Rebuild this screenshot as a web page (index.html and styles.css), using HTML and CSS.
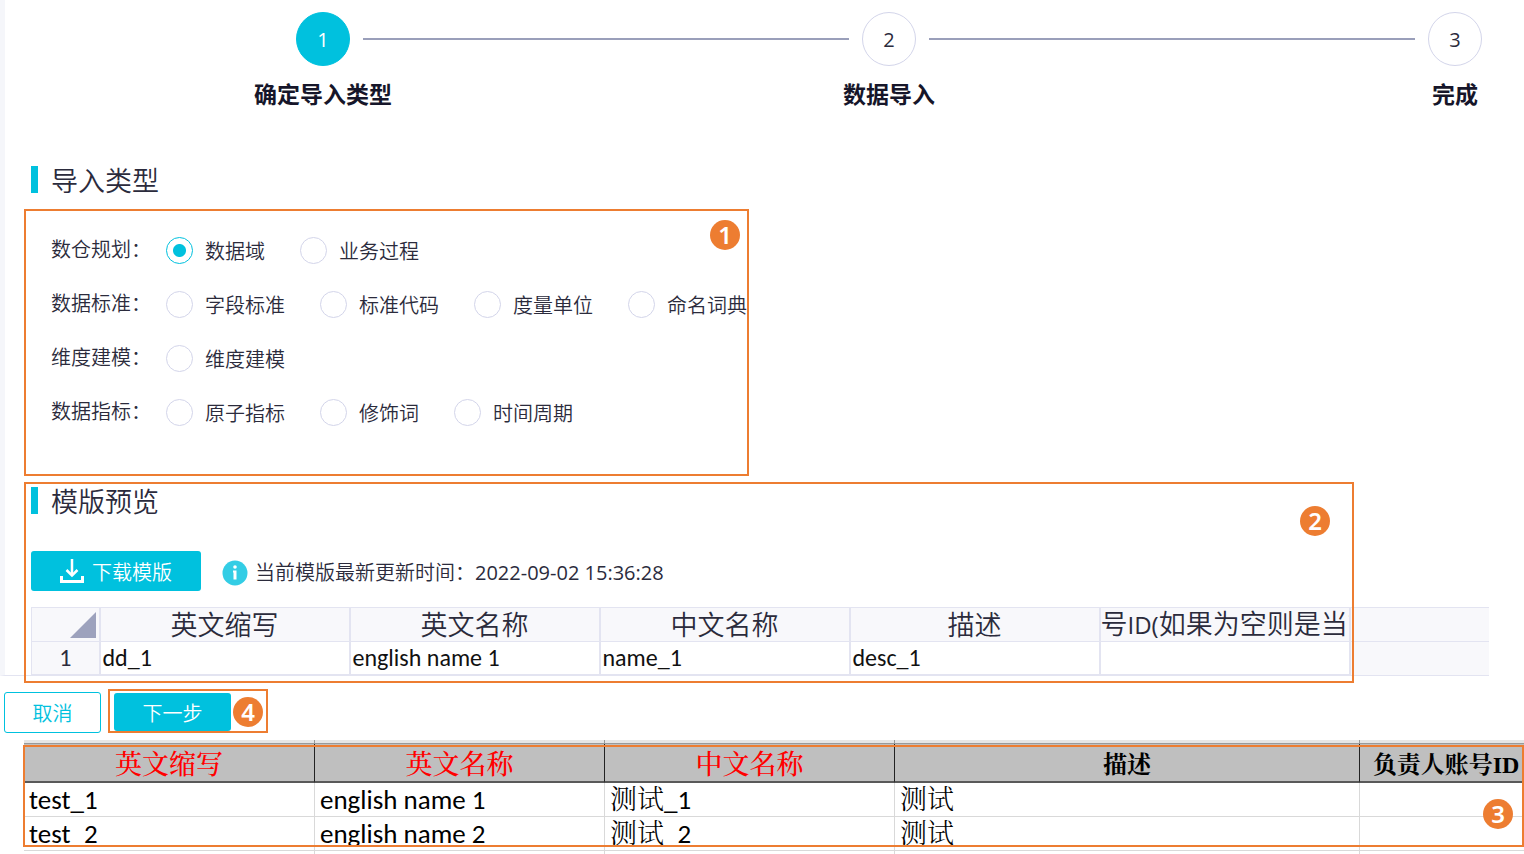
FILE: index.html
```html
<!DOCTYPE html>
<html lang="zh-CN">
<head>
<meta charset="utf-8">
<meta name="viewport" content="width=device-width, initial-scale=1">
<title>数据导入</title>
<link rel="stylesheet" href="styles.css">
</head>
<body>
<main class="panel">
  <ol class="steps">
    <li class="step step-active"><span class="step-dot">1</span><span class="step-label">确定导入类型</span></li>
    <li class="step-line" aria-hidden="true"></li>
    <li class="step"><span class="step-dot">2</span><span class="step-label">数据导入</span></li>
    <li class="step-line" aria-hidden="true"></li>
    <li class="step"><span class="step-dot">3</span><span class="step-label">完成</span></li>
  </ol>

  <h2 class="section-title section-title-first">导入类型</h2>
  <form class="types">
    <span class="badge types-badge">1</span>
    <div class="type-row" role="group" aria-labelledby="g1">
      <span class="type-name" id="g1">数仓规划<span class="colon">：</span></span>
      <label class="option"><input type="radio" name="type" checked>数据域</label>
      <label class="option"><input type="radio" name="type">业务过程</label>
    </div>
    <div class="type-row" role="group" aria-labelledby="g2">
      <span class="type-name" id="g2">数据标准<span class="colon">：</span></span>
      <label class="option"><input type="radio" name="type">字段标准</label>
      <label class="option"><input type="radio" name="type">标准代码</label>
      <label class="option"><input type="radio" name="type">度量单位</label>
      <label class="option"><input type="radio" name="type">命名词典</label>
    </div>
    <div class="type-row" role="group" aria-labelledby="g3">
      <span class="type-name" id="g3">维度建模<span class="colon">：</span></span>
      <label class="option"><input type="radio" name="type">维度建模</label>
    </div>
    <div class="type-row" role="group" aria-labelledby="g4">
      <span class="type-name" id="g4">数据指标<span class="colon">：</span></span>
      <label class="option"><input type="radio" name="type">原子指标</label>
      <label class="option"><input type="radio" name="type">修饰词</label>
      <label class="option"><input type="radio" name="type">时间周期</label>
    </div>
  </form>

  <section class="preview">
    <h2 class="section-title">模版预览</h2>
    <div class="toolbar">
      <button class="btn btn-primary btn-download" type="button">
        <svg width="24" height="24" viewBox="0 0 24 24" fill="none" stroke="currentColor" stroke-width="3" aria-hidden="true"><path d="M1.500 17v5.500h21V17"/><path d="M12 0v15" stroke-width="2.500"/><path d="M6.500 11l5.500 5.500 5.500-5.500" stroke-width="2.500"/></svg>
        下载模版
      </button>
      <svg class="info" width="26" height="26" viewBox="0 0 26 26" aria-hidden="true"><circle cx="13" cy="13" r="12.500" fill="#33cde5"/><circle cx="13" cy="7" r="1.800" fill="#fff"/><path d="M11 10.500h3.500v9h-3v-7H11z" fill="#fff"/></svg>
      <span class="updated">当前模版最新更新时间：<time>2022-09-02 15:36:28</time></span>
    </div>
    <div class="grid-wrap">
      <table class="grid">
        <colgroup><col class="c-num"><col class="c-cell"><col class="c-cell"><col class="c-cell"><col class="c-cell"><col class="c-cell"><col></colgroup>
        <thead>
          <tr><th class="corner"><svg width="26" height="26" viewBox="0 0 26 26" aria-hidden="true"><path d="M26 0v26H0z" fill="#9da2bd"/></svg></th><th>英文缩写</th><th>英文名称</th><th>中文名称</th><th>描述</th><th class="clipped">号<span class="latin">ID(</span>如果为空则是当前</th><td class="filler" rowspan="2"></td></tr>
        </thead>
        <tbody>
          <tr><th class="row-no">1</th><td>dd_1</td><td>english name 1</td><td>name_1</td><td>desc_1</td><td></td></tr>
        </tbody>
      </table>
    </div>
    <div class="frame preview-frame"><span class="badge preview-badge">2</span></div>
  </section>
</main>

<footer class="actions">
  <button class="btn btn-ghost" type="button">取消</button>
  <div class="next-frame">
    <button class="btn btn-primary btn-next" type="button">下一步</button>
    <span class="badge">4</span>
  </div>
</footer>

<section class="sheet">
  <table class="sheet-table">
    <colgroup><col class="s-first"><col class="s-a"><col class="s-a"><col class="s-b"><col></colgroup>
    <thead>
      <tr class="sliver"><td></td><td></td><td></td><td></td><td></td></tr>
      <tr><th class="required">英文缩写</th><th class="required">英文名称</th><th class="required">中文名称</th><th>描述</th><th class="owner">负责人账号<span class="mono">ID</span></th></tr>
    </thead>
    <tbody>
      <tr><td>test_1</td><td>english name 1</td><td><span class="han">测试</span>_1</td><td><span class="han">测试</span></td><td></td></tr>
      <tr><td>test_2</td><td>english name 2</td><td><span class="han">测试</span>_2</td><td><span class="han">测试</span></td><td></td></tr>
      <tr class="rest"><td></td><td></td><td></td><td></td><td></td></tr>
    </tbody>
  </table>
  <div class="frame sheet-frame"><span class="badge sheet-badge">3</span></div>
</section>
</body>
</html>
```
FILE: styles.css
```css
:root {
  --cyan: #00c1de;
  --orange: #ed7d31;
  --line: #e3e4f1;
  --ink: #2b2b3c;
}

* { box-sizing: border-box; }

body {
  margin: 0;
  background: #fff;
  color: var(--ink);
  font-family: "Open Sans", "Noto Sans CJK SC", sans-serif;
  font-size: 20px;
  font-weight: 350;
}

.panel {
  margin-right: 35px;
  padding: 12px 0 0 19px;
  border-left: 5px solid #f5f6fa;
  border-bottom: 1px solid var(--line);
}

/* Progress steps */
.steps {
  display: flex;
  align-items: flex-start;
  gap: 13px;
  margin: 0;
  padding: 0 7px 0 272px;
  list-style: none;
}

.step {
  display: flex;
  flex: none;
  flex-direction: column;
  align-items: center;
  gap: 12px;
  width: 54px;
}

.step-dot {
  display: grid;
  place-items: center;
  width: 54px;
  height: 54px;
  border: 1px solid #d3d5ea;
  border-radius: 50%;
  font-weight: 400;
}

.step-active .step-dot {
  border-color: var(--cyan);
  background: var(--cyan);
  color: #fff;
}

.step-label {
  color: #16162a;
  font-size: 23px;
  font-weight: 700;
  line-height: 32px;
  white-space: nowrap;
}

.step-line {
  flex: 1;
  height: 2px;
  margin-top: 26px;
  background: #9a9fba;
}

/* Section headings */
.section-title {
  display: flex;
  align-items: center;
  gap: 13px;
  height: 40px;
  margin: 0;
  padding-left: 7px;
  font-size: 27px;
  font-weight: 350;
}

.section-title::before {
  width: 7px;
  height: 27px;
  background: var(--cyan);
  content: "";
}

.section-title-first { margin-top: 49px; }

/* Callouts */
.frame {
  position: absolute;
  border: 2px solid var(--orange);
  pointer-events: none;
}

.badge {
  display: grid;
  flex: none;
  place-items: center;
  width: 30px;
  height: 30px;
  border-radius: 50%;
  background: var(--orange);
  color: #fff;
  font-family: "Noto Sans", sans-serif;
  font-size: 24px;
  font-weight: 600;
  line-height: 30px;
}

.types-badge, .preview-badge, .sheet-badge { position: absolute; }
.types-badge { top: 9px; right: 7px; }
.preview-badge { top: 22px; right: 22px; }
.sheet-badge { right: 9px; bottom: 16px; }

/* Import types */
.types {
  position: relative;
  width: fit-content;
  margin-top: 10px;
  padding: 12px 0 35px 25px;
  border: 2px solid var(--orange);
}

.type-row {
  display: flex;
  align-items: center;
  gap: 35px;
  height: 54px;
}

.type-name {
  width: 80px;
  padding-bottom: 4px;
  white-space: nowrap;
}

.colon { font-family: "Noto Sans CJK TC", sans-serif; }

.option {
  display: flex;
  align-items: center;
  gap: 12px;
  white-space: nowrap;
}

.option input {
  width: 27px;
  height: 27px;
  margin: 0;
  border: 1px solid #d3d5ea;
  border-radius: 50%;
  appearance: none;
}

.option input:checked {
  border-color: var(--cyan);
  background: radial-gradient(circle, var(--cyan) 6px, #fff 7px);
}

/* Template preview */
.preview {
  position: relative;
  margin-top: 4px;
}

.preview-frame {
  top: 2px;
  right: 135px;
  bottom: -8px;
  left: 0;
}

.toolbar {
  display: flex;
  align-items: center;
  margin: 31px 0 16px 7px;
}

.btn {
  display: flex;
  align-items: center;
  justify-content: center;
  padding: 0;
  border: 0;
  border-radius: 3px;
  font: inherit;
}

.btn-primary { background: var(--cyan); color: #fff; }

.btn-download {
  gap: 8px;
  width: 170px;
  height: 40px;
}

.info { margin: 4px 7px 0 21px; }

.updated time { font-weight: 400; }

.grid-wrap { margin-left: 7px; }

.grid {
  width: 100%;
  border-collapse: collapse;
  table-layout: fixed;
  background: #f8f8fb;
}

.c-num { width: 68px; }
.c-cell { width: 250px; }

.grid th, .grid td {
  height: 33px;
  padding: 0 2px;
  border: 1px solid var(--line);
  border-width: 1px 2px 1px 1px;
  white-space: nowrap;
}

.grid thead th {
  font-size: 27px;
  font-weight: 350;
  line-height: 32px;
}

.grid tbody td, .grid tbody th {
  color: #111;
  font-family: Carlito, Lato, sans-serif;
  font-size: 24px;
  font-weight: 400;
  line-height: 32px;
}

.grid tbody td { background: #fff; }
.grid .row-no { color: var(--ink); }
.grid .filler { border-right: 0; }
.grid .clipped { padding: 0; overflow: hidden; text-align: left; }
.latin { font-size: 24px; font-weight: 400; }
.grid .corner { padding-right: 3px; }
.corner svg { display: block; margin-left: auto; }

/* Bottom actions */
.actions {
  display: flex;
  align-items: flex-end;
  gap: 7px;
  margin-top: 13px;
  padding-left: 4px;
}

.btn-ghost {
  width: 97px;
  height: 41px;
  border: 1px solid var(--cyan);
  background: #fff;
  color: var(--cyan);
}

.next-frame {
  display: flex;
  align-items: center;
  gap: 2px;
  padding: 2px 3px 0 4px;
  border: 2px solid var(--orange);
}

.btn-next {
  width: 117px;
  height: 38px;
}

/* Filled-in spreadsheet */
.sheet {
  position: relative;
  margin: 7px 0 0 24px;
}

.sheet-frame {
  top: 5px;
  right: 0;
  bottom: 7px;
  left: -1px;
}

.sheet-table {
  width: 100%;
  border-spacing: 0;
  table-layout: fixed;
  color: #000;
}

.s-first { width: 291px; }
.s-a { width: 290px; }
.s-b { width: 465px; }

.sheet-table td {
  height: 34px;
  padding: 0 5px;
  border-right: 1px solid #d9d9d9;
  border-bottom: 1px solid #d9d9d9;
  font-family: Carlito, Lato, sans-serif;
  font-size: 27px;
  font-weight: 400;
  line-height: 32px;
  white-space: nowrap;
}

.sheet-table th {
  height: 39px;
  padding: 0;
  border-right: 1px solid #222;
  border-bottom: 2px solid #595959;
  background: #bfbfbf;
  font-family: "Noto Serif CJK SC", "Noto Sans CJK SC", serif;
  font-size: 24px;
  font-weight: 700;
  line-height: 34px;
  white-space: nowrap;
}

.sheet-table .required {
  color: #f00;
  font-size: 27px;
  font-weight: 500;
}

.sheet-table .owner { padding-left: 8px; }

.han {
  font-family: "Noto Serif CJK SC", "Noto Sans CJK SC", serif;
  font-weight: 300;
  line-height: 24px;
}

.mono {
  font-family: "Liberation Serif", serif;
  line-height: 24px;
}

.sheet-table .sliver td {
  height: 4px;
  border-right-color: #999;
  border-bottom-color: #999;
  background: #e6e6e6;
}

.sheet-table .rest td {
  height: 3px;
  border-bottom: 0;
}

.sheet-table th:last-child, .sheet-table td:last-child { border-right: 0; }
```
